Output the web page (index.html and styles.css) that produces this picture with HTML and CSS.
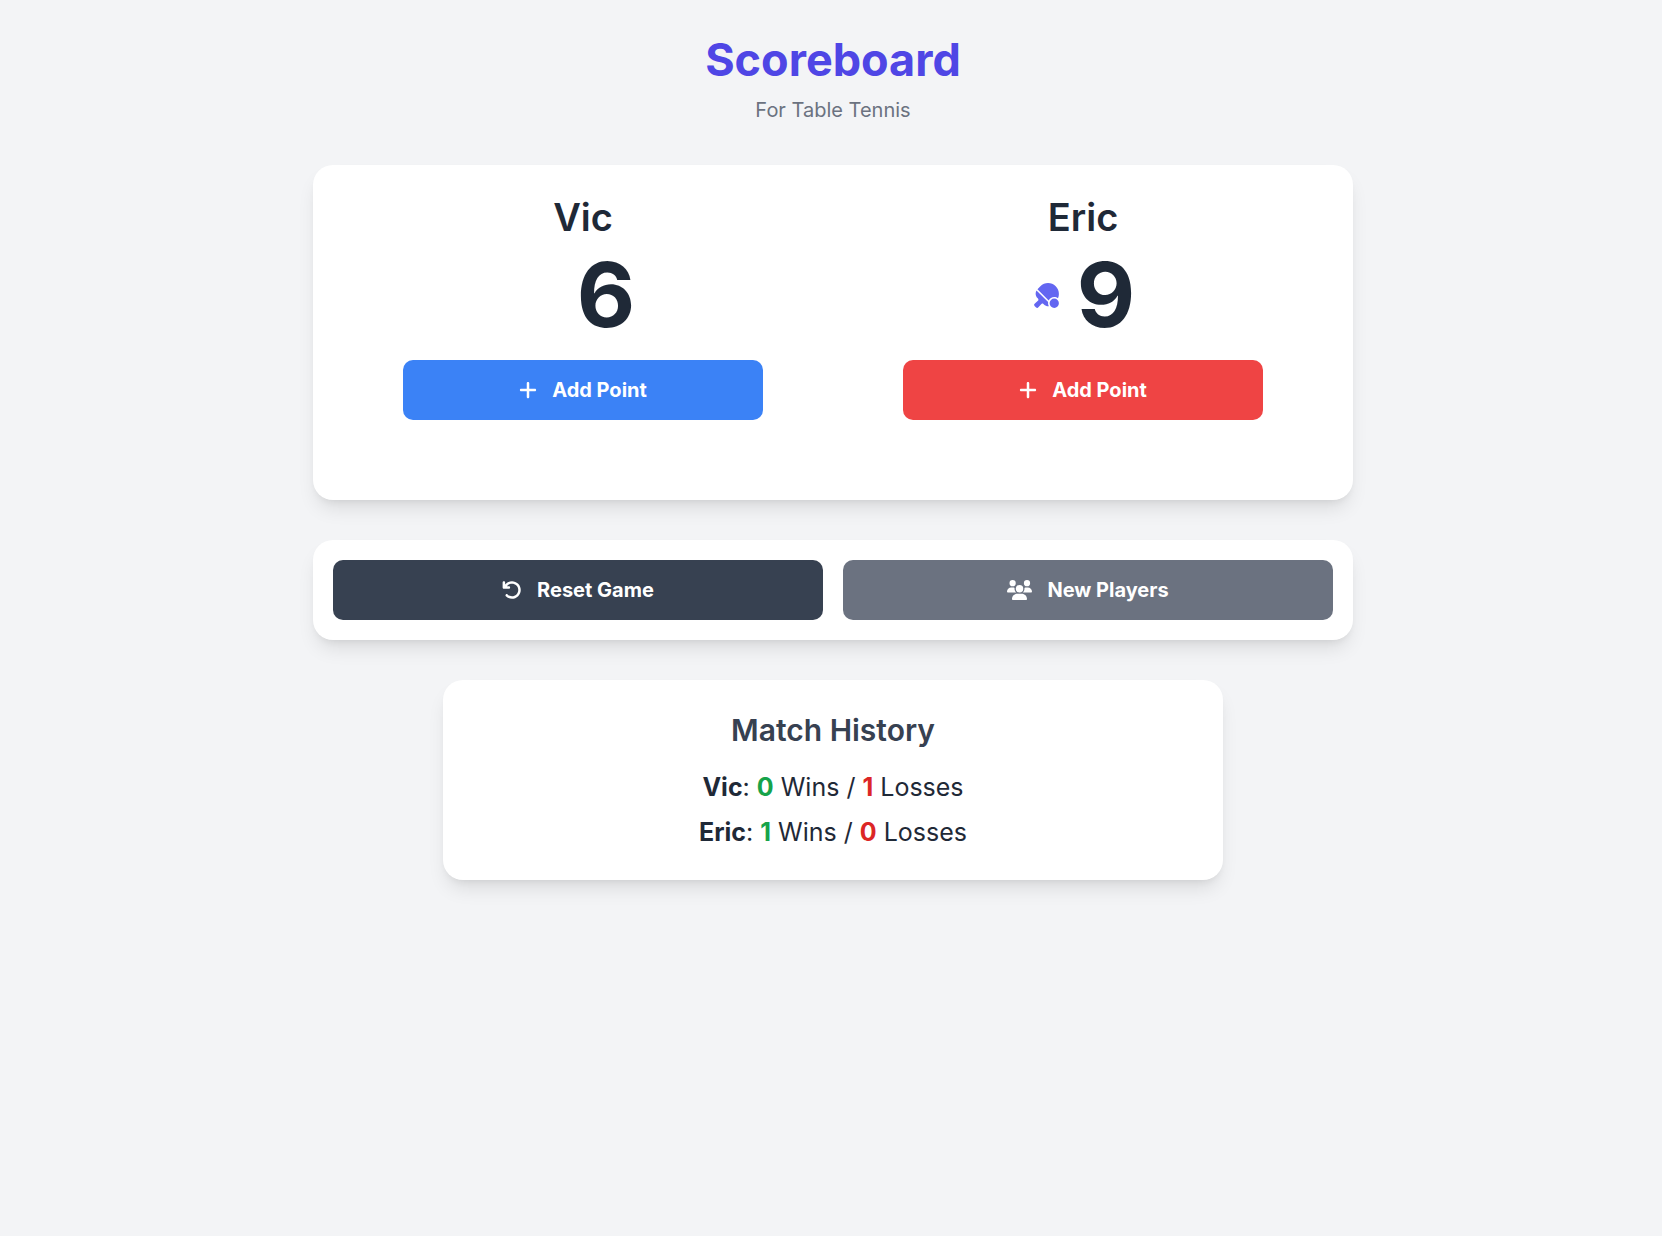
FILE: index.html
```html
<!DOCTYPE html>
<html lang="en">
<head>
  <meta charset="utf-8">
  <meta name="viewport" content="width=device-width, initial-scale=1">
  <title>Scoreboard</title>
  <link rel="stylesheet" href="styles.css">
</head>
<body>
  <svg class="sprite" aria-hidden="true">
    <symbol id="plus" viewBox="0 0 448 512"><path d="M256 80c0-17.700-14.300-32-32-32s-32 14.300-32 32V224H48c-17.700 0-32 14.300-32 32s14.300 32 32 32H192V432c0 17.700 14.300 32 32 32s32-14.300 32-32V288H400c17.700 0 32-14.300 32-32s-14.300-32-32-32H256V80z"/></symbol>
  </svg>
  <div class="page">
    <header class="header">
      <h1 class="title">Scoreboard</h1>
      <p class="subtitle">For Table Tennis</p>
    </header>

    <main class="stack">
      <section class="card players" aria-label="Current game">
        <div class="player">
          <h2 class="name">Vic</h2>
          <div class="score">
            <span class="serve"></span>
            <span>6</span>
          </div>
          <button class="button add blue" type="button">
            <svg class="icon narrow" aria-hidden="true"><use href="#plus"/></svg>
            Add Point
          </button>
        </div>
        <div class="player">
          <h2 class="name">Eric</h2>
          <div class="score">
            <svg class="serve" viewBox="0 0 640 512" role="img" aria-label="Serving"><path d="M480 288c-50.100 0-93.600 28.800-114.600 70.800L132.900 126.300l.6-.6 60.100-60.100c87.500-87.500 229.300-87.500 316.800 0c67.100 67.100 82.700 166.300 46.800 248.300C535.800 297.600 509 288 480 288zM113.300 151.900L354.100 392.700c-1.400 7.500-2.100 15.300-2.100 23.300c0 23.200 6.200 44.900 16.900 63.700c-3 .2-6.100 .3-9.200 .3H357c-33.900 0-66.500-13.500-90.500-37.500l-9.800-9.800c-13.100-13.100-34.600-12.400-46.800 1.700L152.200 501c-5.800 6.700-14.200 10.700-23 11s-17.500-3.100-23.800-9.400l-32-32c-6.300-6.300-9.700-14.900-9.400-23.800s4.300-17.200 11-23l66.600-57.700c14-12.200 14.800-33.700 1.700-46.800l-9.800-9.800C109.500 285.500 96 252.900 96 219v-2.700c0-22.500 6-44.500 17.300-64.400zM480 320a96 96 0 1 1 0 192 96 96 0 1 1 0-192z"/></svg>
            <span>9</span>
          </div>
          <button class="button add red" type="button">
            <svg class="icon narrow" aria-hidden="true"><use href="#plus"/></svg>
            Add Point
          </button>
        </div>
      </section>

      <section class="card actions" aria-label="Game actions">
        <button class="button dark" type="button">
          <svg class="icon" viewBox="0 0 512 512" aria-hidden="true"><path d="M125.700 160H176c17.700 0 32 14.300 32 32s-14.300 32-32 32H48c-17.700 0-32-14.300-32-32V64c0-17.700 14.300-32 32-32s32 14.300 32 32v51.200L97.600 97.600c87.500-87.500 229.300-87.500 316.800 0s87.500 229.300 0 316.800s-229.300 87.500-316.800 0c-12.500-12.500-12.500-32.800 0-45.300s32.800-12.500 45.300 0c62.500 62.500 163.800 62.500 226.300 0s62.500-163.800 0-226.300s-163.800-62.500-226.300 0L125.700 160z"/></svg>
          Reset Game
        </button>
        <button class="button gray" type="button">
          <svg class="icon wide" viewBox="0 0 640 512" aria-hidden="true"><path d="M144 0a80 80 0 1 1 0 160A80 80 0 1 1 144 0zM512 0a80 80 0 1 1 0 160A80 80 0 1 1 512 0zM0 298.700C0 239.800 47.800 192 106.700 192h42.700c15.900 0 31 3.500 44.600 9.700c-1.300 7.200-1.900 14.700-1.900 22.300c0 38.200 16.800 72.500 43.300 96c-.2 0-.4 0-.7 0H21.300C9.600 320 0 310.400 0 298.700zM405.300 320c-.2 0-.4 0-.7 0c26.600-23.500 43.300-57.800 43.300-96c0-7.600-.7-15-1.900-22.300c13.600-6.300 28.700-9.700 44.600-9.700h42.700C592.200 192 640 239.800 640 298.700c0 11.800-9.600 21.300-21.300 21.300H405.300zM224 224a96 96 0 1 1 192 0 96 96 0 1 1-192 0zM128 485.300C128 411.700 187.700 352 261.300 352H378.700C452.300 352 512 411.700 512 485.300c0 14.700-11.900 26.700-26.700 26.700H154.700c-14.700 0-26.700-11.900-26.700-26.700z"/></svg>
          New Players
        </button>
      </section>

      <section class="card history">
        <h2 class="history-title">Match History</h2>
        <p class="record"><strong>Vic</strong>: <strong class="wins">0</strong> Wins / <strong class="losses">1</strong> Losses</p>
        <p class="record"><strong>Eric</strong>: <strong class="wins">1</strong> Wins / <strong class="losses">0</strong> Losses</p>
      </section>
    </main>
  </div>
</body>
</html>
```
FILE: styles.css
```css
* {
  box-sizing: border-box;
}

body {
  margin: 0;
  background: #f3f4f6;
  color: #1f2937;
  font-family: Inter, "Liberation Sans", sans-serif;
}

h1, h2, p {
  margin: 0;
}

.sprite {
  display: none;
}

.page {
  padding: 35px 20px 40px 24px;
}

.header {
  margin-bottom: 40px;
  text-align: center;
}

.title {
  margin-bottom: 10px;
  color: #4f46e5;
  font-size: 45px;
  font-weight: 700;
  line-height: 50px;
}

.subtitle {
  color: #6b7280;
  font-size: 20px;
  line-height: 30px;
}

.stack {
  display: flex;
  flex-direction: column;
  align-items: center;
  gap: 40px;
  max-width: 1040px;
  margin: 0 auto;
}

.card {
  width: 100%;
  border-radius: 20px;
  background: #fff;
  box-shadow: 0 12px 19px -4px rgb(0 0 0 / 10%), 0 5px 8px -5px rgb(0 0 0 / 10%);
}

.players {
  display: grid;
  grid-template-columns: 1fr 1fr;
  gap: 20px;
  padding: 30px 30px 80px;
}

.player {
  display: flex;
  flex-direction: column;
  align-items: center;
}

.name {
  margin-bottom: 10px;
  font-size: 38px;
  font-weight: 600;
  line-height: 45px;
}

.score {
  display: flex;
  align-items: center;
  gap: 15px;
  margin-bottom: 20px;
  font-size: 90px;
  font-weight: 700;
  line-height: 90px;
}

.serve {
  width: 31px;
  height: 25px;
  fill: #6366f1;
}

.button {
  display: flex;
  align-items: center;
  justify-content: center;
  gap: 15px;
  padding: 15px 20px;
  border: 0;
  border-radius: 10px;
  color: #fff;
  font: 700 20px/30px Inter, "Liberation Sans", sans-serif;
  cursor: pointer;
}

.add {
  width: 75%;
}

.blue {
  background: #3b82f6;
}

.red {
  background: #ef4444;
}

.dark {
  background: #374151;
}

.gray {
  background: #6b7280;
}

.icon {
  width: 20px;
  height: 20px;
  fill: currentColor;
}

.narrow {
  width: 18px;
}

.wide {
  width: 25px;
}

.actions {
  display: grid;
  grid-template-columns: 1fr 1fr;
  gap: 20px;
  padding: 20px;
}

.history {
  display: flex;
  flex-direction: column;
  gap: 10px;
  width: 75%;
  padding: 30px;
  text-align: center;
}

.history-title {
  margin-bottom: 10px;
  color: #374151;
  font-size: 30px;
  font-weight: 600;
  line-height: 40px;
}

.record {
  font-size: 25px;
  line-height: 35px;
}

.wins {
  color: #16a34a;
}

.losses {
  color: #dc2626;
}
```
